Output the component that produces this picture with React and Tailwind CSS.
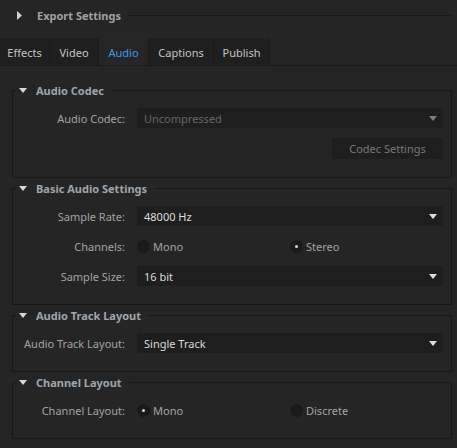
import React from "react";

const font = { fontFamily: '"Noto Sans", "Liberation Sans", sans-serif' };

function DownTri({ color = "#d6d6d6" }) {
  return (
    <svg width="8" height="5" viewBox="0 0 8 5" className="block">
      <polygon points="0,0 8,0 4,5" fill={color} />
    </svg>
  );
}

function Group({ title, children }) {
  return (
    <fieldset className="ml-[12px] mr-[5px] border border-[#181818] pt-[11px] pb-[18px]">
      <legend className="ml-[3px] pl-[3px] pr-[7px] flex items-center h-[14px]">
        <DownTri />
        <span className="ml-[9px] text-[11px] font-bold leading-[14px] h-[14px] pt-[1px] text-[#9ea6ae]">{title}</span>
      </legend>
      <div className="flex flex-col gap-[10px]">{children}</div>
    </fieldset>
  );
}

function Row({ label, children }) {
  return (
    <div className="flex items-center h-[20px]">
      <div className="w-[112px] h-[20px] pt-[1px] text-right text-[11px] text-[#a3a3a3] leading-[20px]">{label}</div>
      <div className="ml-[12px] w-[306px] flex items-center">{children}</div>
    </div>
  );
}

function Select({ value, disabled }) {
  return (
    <div className="h-[20px] w-full bg-[#1e1e1e] flex items-center justify-between pl-[7px] pr-[6px]">
      <span className={"text-[11px] leading-[20px] h-[20px] pt-[1px] " + (disabled ? "text-[#666666]" : "text-[#dcdcdc]")}>{value}</span>
      <DownTri color={disabled ? "#7e7e7e" : "#dedede"} />
    </div>
  );
}

function Radio({ label, checked }) {
  return (
    <div className="flex items-center h-[20px]">
      <div className="w-[13px] h-[13px] rounded-full bg-[#1a1a1a] flex items-center justify-center">
        {checked && <div className="w-[3px] h-[3px] rounded-full bg-[#d8d8d8]" />}
      </div>
      <span className="ml-[3px] text-[11px] leading-[20px] h-[20px] pt-[1px] text-[#a3a3a3]">{label}</span>
    </div>
  );
}

function RadioPair({ a, b, checked }) {
  return (
    <div className="grid grid-cols-2 w-full">
      <Radio label={a} checked={checked === 0} />
      <Radio label={b} checked={checked === 1} />
    </div>
  );
}

export default function App() {
  const tabs = [
    { name: "Effects", w: "w-[50px]" },
    { name: "Video", w: "w-[49px]" },
    { name: "Audio", w: "w-[50px]", active: true },
    { name: "Captions", w: "w-[65px]" },
    { name: "Publish", w: "w-[56px]" },
  ];
  return (
    <div style={font} className="w-[457px] h-[448px] bg-[#252525] overflow-hidden">
      <div className="h-[30px] flex items-center pl-[17px] pr-[5px]">
        <svg width="5" height="9" viewBox="0 0 5 9" className="block">
          <polygon points="0,0 5,4.5 0,9" fill="#d0d0d0" />
        </svg>
        <span className="ml-[15px] text-[11px] font-bold text-[#a2a2a2] leading-[16px] h-[16px] pt-[1px]">Export Settings</span>
        <div className="ml-[7px] flex-1 h-px bg-[#1a1a1a]" />
      </div>
      <div className="mt-[8px] flex border-b border-[#1a1a1a]">
        {tabs.map((t) => (
          <div
            key={t.name}
            className={
              t.w +
              " h-[27px] pt-[3px] flex items-center justify-center text-[11px] border-r border-[#1a1a1a] " +
              (t.active ? "bg-[#262626] text-[#3a9ae8]" : "bg-[#1f1f1f] text-[#c4c4c4]")
            }
          >
            {t.name}
          </div>
        ))}
      </div>
      <div className="mt-[17px] flex flex-col gap-[3px]">
        <Group title="Audio Codec">
          <Row label="Audio Codec:">
            <Select value="Uncompressed" disabled />
          </Row>
          <div className="flex justify-end pr-[8px]">
            <div className="w-[111px] h-[21px] pt-[1px] bg-[#1e1e1e] flex items-center justify-center text-[11px] text-[#787878]">
              Codec Settings
            </div>
          </div>
        </Group>
        <Group title="Basic Audio Settings">
          <Row label="Sample Rate:">
            <Select value="48000 Hz" />
          </Row>
          <Row label="Channels:">
            <RadioPair a="Mono" b="Stereo" checked={1} />
          </Row>
          <Row label="Sample Size:">
            <Select value="16 bit" />
          </Row>
        </Group>
        <Group title="Audio Track Layout">
          <Row label="Audio Track Layout:">
            <Select value="Single Track" />
          </Row>
        </Group>
        <Group title="Channel Layout">
          <Row label="Channel Layout:">
            <RadioPair a="Mono" b="Discrete" checked={0} />
          </Row>
        </Group>
      </div>
    </div>
  );
}
